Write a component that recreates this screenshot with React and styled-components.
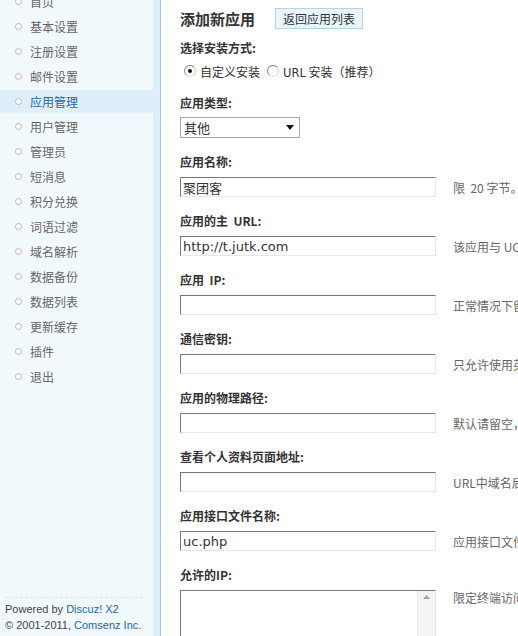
import React from "react";
import styled, { createGlobalStyle } from "styled-components";

const GlobalStyle = createGlobalStyle`
  html, body {
    margin: 0;
    padding: 0;
    height: 100%;
    overflow: hidden;
    background: #fff;
  }
  body {
    font-family: "Noto Sans CJK SC", "DejaVu Sans", sans-serif;
    font-size: 12px;
    color: #333;
  }
`;

const Shell = styled.div`
  display: flex;
  height: 100vh;
  overflow: hidden;
`;

const Sidebar = styled.aside`
  flex: 0 0 153px;
  display: flex;
  flex-direction: column;
  background: #f2f9fd;
  border-right: 7px solid #deeffa;
  box-shadow: 1px 0 0 #a9c6d8;
  overflow: hidden;
`;

const Menu = styled.ul`
  list-style: none;
  margin: -10px 0 0;
  padding: 0;
`;

const MenuItem = styled.li`
  display: flex;
  align-items: center;
  height: 23px;
  margin-bottom: 2px;
  padding-left: 15px;
  gap: 8px;
  font-size: 12px;
  color: ${(p) => (p.$active ? "#2366a8" : "#666")};
  background: ${(p) => (p.$active ? "#deeffa" : "transparent")};
`;

const Bullet = styled.span`
  width: 5px;
  height: 5px;
  border-radius: 50%;
  border: 1px solid #b8b8b8;
  background: #fff;
`;

const Footer = styled.div`
  margin: auto 10px 0 5px;
  padding: 3px 0 3px;
  border-top: 1px dashed #dde5ea;
  font-family: "Liberation Sans", Arial, sans-serif;
  font-size: 11px;
  line-height: 16px;
  color: #444;
  white-space: nowrap;
`;

const Brand = styled.span`
  color: #2366a8;
`;

const Main = styled.main`
  flex: 1;
  min-width: 0;
  margin-left: 1px;
  padding: 8px 0 0 19px;
  overflow: hidden;
`;

const Header = styled.div`
  display: flex;
  align-items: center;
  gap: 20px;
  margin-bottom: 10px;
`;

const Title = styled.h1`
  margin: 0;
  font-size: 15px;
  font-weight: bold;
  color: #333;
`;

const BackButton = styled.button`
  height: 21px;
  padding: 0 7px;
  border: 1px solid #b7d2e3;
  background: #eaf4fb;
  font-family: "Noto Sans CJK SC", sans-serif;
  font-size: 12px;
  color: #333;
  line-height: 19px;
`;

const Field = styled.div`
  margin-bottom: 15px;
`;

const Label = styled.div`
  height: 18px;
  line-height: 18px;
  margin-bottom: ${(p) => p.$gap ?? 6}px;
  font-weight: bold;
  color: #333;
  white-space: pre;
`;

const Row = styled.div`
  display: flex;
  align-items: ${(p) => (p.$top ? "flex-start" : "center")};
  gap: 17px;
`;

const RadioRow = styled.div`
  display: flex;
  align-items: center;
  height: 16px;
  color: #333;
`;

const RadioOption = styled.label`
  display: flex;
  align-items: center;
  gap: 4px;
  margin-left: ${(p) => (p.$first ? 4 : 7)}px;
`;

const RadioDot = styled.span`
  position: relative;
  width: 10px;
  height: 10px;
  border-radius: 50%;
  border: 1px solid;
  border-color: #777 #cfcfcf #e2e2e2 #888;
  background: #fff;

  &::after {
    content: "";
    display: ${(p) => (p.$checked ? "block" : "none")};
    position: absolute;
    left: 3px;
    top: 3px;
    width: 4px;
    height: 4px;
    border-radius: 50%;
    background: #111;
  }
`;

const Latin = styled.span`
  font-family: "DejaVu Sans", sans-serif;
  font-size: 11.5px;
`;

const SelectBox = styled.div`
  box-sizing: border-box;
  width: 120px;
  height: 21px;
  display: flex;
  align-items: center;
  justify-content: space-between;
  padding: 0 5px 0 3px;
  border: 1px solid #a8a8a8;
  background: #fff;
  font-size: 13px;
  color: #333;
`;

const TextInput = styled.input`
  box-sizing: border-box;
  flex: 0 0 256px;
  width: 256px;
  height: 20px;
  margin: 0;
  padding: 0 2px;
  border: 1px solid;
  border-color: #777 #e6e6e6 #e6e6e6 #777;
  background: #fff;
  font-family: "DejaVu Sans", "Noto Sans CJK SC", sans-serif;
  font-size: 13px;
  color: #333;
  outline: none;
`;

const AreaBox = styled.div`
  box-sizing: border-box;
  flex: 0 0 256px;
  display: flex;
  height: 80px;
  border: 1px solid;
  border-color: #777 #e6e6e6 #e6e6e6 #777;
  background: #fff;
`;

const Area = styled.textarea`
  flex: 1;
  margin: 0;
  border: 0;
  resize: none;
  outline: none;
  background: transparent;
`;

const ScrollTrack = styled.div`
  flex: 0 0 17px;
  display: flex;
  justify-content: center;
  padding-top: 4px;
  background: #f4f4f4;
  border-left: 1px solid #ebebeb;
`;

const Hint = styled.span`
  white-space: pre;
  color: #666;
  font-size: 12px;
  margin-top: ${(p) => p.$offset ?? 0}px;
`;

const menu = [
  "首页",
  "基本设置",
  "注册设置",
  "邮件设置",
  "应用管理",
  "用户管理",
  "管理员",
  "短消息",
  "积分兑换",
  "词语过滤",
  "域名解析",
  "数据备份",
  "数据列表",
  "更新缓存",
  "插件",
  "退出",
];

const fields = [
  { label: "应用名称:", value: "聚团客", hint: "限  20 字节。" },
  {
    label: "应用的主  URL:",
    value: "http://t.jutk.com",
    hint: "该应用与 UCenter 通信的接口 URL，结尾请不要加“/”",
  },
  { label: "应用  IP:", value: "", hint: "正常情况下留空即可。" },
  { label: "通信密钥:", value: "", hint: "只允许使用英文字母及数字，限 64 字节。" },
  { label: "应用的物理路径:", value: "", hint: "默认请留空，如果填写的为相对路径" },
  { label: "查看个人资料页面地址:", value: "", hint: "URL中域名后面的部分，如：/space.php?uid=%s" },
  { label: "应用接口文件名称:", value: "uc.php", hint: "应用接口文件名称，不包含路径，默认为uc.php" },
];

export default function App() {
  return (
    <>
      <GlobalStyle />
      <Shell>
        <Sidebar>
          <Menu>
            {menu.map((item) => (
              <MenuItem key={item} $active={item === "应用管理"}>
                <Bullet />
                {item}
              </MenuItem>
            ))}
          </Menu>
          <Footer>
            <div>
              Powered by <Brand>Discuz! X2</Brand>
            </div>
            <div>
              © 2001-2011, <Brand>Comsenz Inc.</Brand>
            </div>
          </Footer>
        </Sidebar>

        <Main>
          <Header>
            <Title>添加新应用</Title>
            <BackButton type="button">返回应用列表</BackButton>
          </Header>

          <Field>
            <Label>选择安装方式:</Label>
            <RadioRow>
              <RadioOption $first>
                <RadioDot $checked />
                自定义安装
              </RadioOption>
              <RadioOption>
                <RadioDot />
                <span>
                  <Latin>URL</Latin> 安装（推荐）
                </span>
              </RadioOption>
            </RadioRow>
          </Field>

          <Field>
            <Label $gap={5}>应用类型:</Label>
            <SelectBox>
              <span>其他</span>
              <svg width="8" height="5" viewBox="0 0 8 5">
                <path d="M0 0h8L4 5z" fill="#111" />
              </svg>
            </SelectBox>
          </Field>

          {fields.map((f) => (
            <Field key={f.label}>
              <Label>{f.label}</Label>
              <Row>
                <TextInput defaultValue={f.value} readOnly />
                <Hint>{f.hint}</Hint>
              </Row>
            </Field>
          ))}

          <Field>
            <Label>允许的IP:</Label>
            <Row $top>
              <AreaBox>
                <Area readOnly />
                <ScrollTrack>
                  <svg width="7" height="4" viewBox="0 0 7 4">
                    <path d="M0 4L3.5 0L7 4z" fill="#a0a0a0" />
                  </svg>
                </ScrollTrack>
              </AreaBox>
              <Hint $offset={-1}>限定终端访问的 IP 地址</Hint>
            </Row>
          </Field>
        </Main>
      </Shell>
    </>
  );
}
